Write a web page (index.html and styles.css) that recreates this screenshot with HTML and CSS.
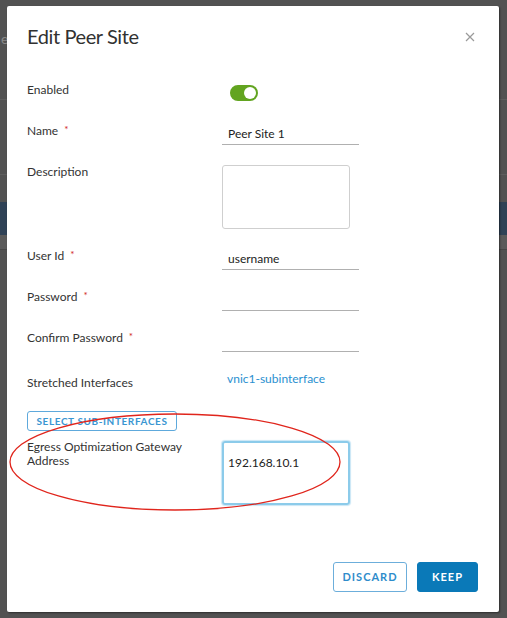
FILE: index.html
```html
<!DOCTYPE html>
<html>
<head>
<meta charset="utf-8">
<link rel="stylesheet" href="styles.css">
</head>
<body>
<div class="backdrop">
  <div class="bg-head"><span class="bg-letter">e</span></div>
  <div class="bg-line"></div>
  <div class="bg-gap"></div>
  <div class="bg-line"></div>
  <div class="bg-gap2"></div>
  <div class="bg-blue"></div>
  <div class="bg-light"></div>
</div>

<div class="modal">
  <div class="modal-header">
    <h1 class="modal-title">Edit Peer Site</h1>
    <svg class="close" width="10" height="10" viewBox="0 0 10 10"><path d="M1 1 L9 9 M9 1 L1 9" stroke="#9a9a9a" stroke-width="1.2" fill="none"/></svg>
  </div>

  <div class="form">
    <div class="row">
      <div class="label">Enabled</div>
      <div class="control"><div class="toggle"><div class="knob"></div></div></div>
    </div>
    <div class="row">
      <div class="label">Name<span class="req">*</span></div>
      <div class="control"><div class="input">Peer Site 1</div></div>
    </div>
    <div class="row row-tall">
      <div class="label">Description</div>
      <div class="control"><div class="textarea"></div></div>
    </div>
    <div class="row">
      <div class="label">User Id<span class="req">*</span></div>
      <div class="control"><div class="input">username</div></div>
    </div>
    <div class="row">
      <div class="label">Password<span class="req">*</span></div>
      <div class="control"><div class="input"></div></div>
    </div>
    <div class="row row-mid">
      <div class="label">Confirm Password<span class="req">*</span></div>
      <div class="control"><div class="input"></div></div>
    </div>
    <div class="row row-stretch">
      <div class="label">Stretched Interfaces</div>
      <div class="control"><span class="link">vnic1-subinterface</span></div>
    </div>
    <div class="btn-row">
      <div class="btn-outline-sm">SELECT SUB-INTERFACES</div>
    </div>
    <div class="row row-egress">
      <div class="label label-wrap">Egress Optimization Gateway<br>Address</div>
      <div class="control"><div class="textarea focus">192.168.10.1</div></div>
    </div>
  </div>

  <div class="footer">
    <div class="btn btn-outline">DISCARD</div>
    <div class="btn btn-primary">KEEP</div>
  </div>
</div>

<svg class="annotation" width="507" height="618" viewBox="0 0 507 618">
  <ellipse cx="175" cy="462" rx="165" ry="48" fill="none" stroke="#e0251c" stroke-width="1.3"/>
</svg>
</body>
</html>
```
FILE: styles.css
```css
html, body {
  margin: 0;
  padding: 0;
}
body {
  width: 507px;
  height: 618px;
  background: #525252;
  overflow: hidden;
  position: relative;
  font-family: Lato, "Open Sans", sans-serif;
  color: #333;
}

/* page behind the modal */
.backdrop {
  display: flex;
  flex-direction: column;
}
.bg-head {
  height: 99px;
}
.bg-letter {
  display: block;
  padding: 31px 0 0 1px;
  font-size: 14px;
  line-height: 16px;
  color: #8a8a8a;
}
.bg-line {
  height: 1px;
  background: #5e5e5e;
}
.bg-gap { height: 74px; }
.bg-gap2 { height: 27px; }
.bg-blue {
  height: 33px;
  background: #2f4256;
}
.bg-light {
  height: 14px;
  background: #5a5a5a;
  border-bottom: 1px solid #474747;
}

/* modal */
.modal {
  position: absolute;
  left: 7px;
  top: 6px;
  width: 492px;
  height: 606px;
  background: #fff;
  box-shadow: 1px 1px 2px rgba(0,0,0,0.45);
  border-radius: 2px;
  box-sizing: border-box;
  padding: 18px 21px 0 20px;
  display: flex;
  flex-direction: column;
}
.modal-header {
  display: flex;
  justify-content: space-between;
  align-items: flex-start;
  height: 58px;
}
.modal-title {
  margin: 0;
  font-size: 20px;
  line-height: 24px;
  font-weight: 400;
  letter-spacing: -0.4px;
  color: #313131;
}
.close {
  margin-top: 8px;
  margin-right: 3px;
}

.form {
  display: flex;
  flex-direction: column;
}
.row {
  display: flex;
  height: 41px;
}
.row-tall { height: 84px; }
.row-mid { height: 45px; }
.row-stretch { height: 36px; }
.row-egress { height: 70px; }
.label {
  width: 195px;
  flex: none;
  font-size: 12px;
  line-height: 13px;
  color: #333;
  padding-top: 1px;
}
.label-wrap {
  line-height: 14px;
  padding-top: 0;
}
.req {
  color: #d0281c;
  font-size: 10px;
  margin-left: 6px;
  vertical-align: top;
  position: relative;
  top: -1px;
}
.control {
  flex: none;
}
.toggle {
  margin-top: 3px;
  margin-left: 8px;
  width: 28px;
  height: 16px;
  border-radius: 8px;
  background: #62a420;
  position: relative;
}
.knob {
  position: absolute;
  right: 2px;
  top: 2px;
  width: 12px;
  height: 12px;
  border-radius: 50%;
  background: #fff;
}
.input {
  margin-top: 1px;
  width: 137px;
  height: 21px;
  box-sizing: border-box;
  border-bottom: 1px solid #b0b0b0;
  padding: 0 6px;
  font-size: 12px;
  line-height: 19px;
  color: #222;
}
.textarea {
  margin-top: 1px;
  width: 128px;
  height: 64px;
  box-sizing: border-box;
  border: 1px solid #cfcfcf;
  border-radius: 3px;
  font-size: 12px;
  color: #222;
}
.textarea.focus {
  border: 2px solid #8ccbea;
  box-shadow: 0 0 1px 1px #c9e6f5;
  padding: 12px 4px 0 4px;
  line-height: 16px;
}
.link {
  display: block;
  margin-top: -3px;
  margin-left: 5px;
  font-size: 12px;
  line-height: 14px;
  color: #2a90d0;
}
.btn-row {
  display: flex;
  height: 29px;
}
.btn-outline-sm {
  width: 150px;
  height: 20px;
  box-sizing: border-box;
  border: 1px solid #5ea9dc;
  border-radius: 3px;
  color: #3a96d2;
  font-size: 10px;
  font-weight: 700;
  letter-spacing: 0.6px;
  line-height: 18px;
  text-align: center;
}

.footer {
  margin-top: auto;
  margin-bottom: 20px;
  display: flex;
  justify-content: flex-end;
  gap: 10px;
}
.btn {
  height: 30px;
  box-sizing: border-box;
  border-radius: 3px;
  font-size: 11px;
  font-weight: 700;
  letter-spacing: 1px;
  line-height: 28px;
  text-align: center;
}
.btn-outline {
  width: 74px;
  border: 1px solid #6caedb;
  color: #2e8ccb;
}
.btn-primary {
  width: 61px;
  background: #0a79b8;
  border: 1px solid #0a79b8;
  color: #fff;
}

.annotation {
  position: absolute;
  left: 0;
  top: 0;
  pointer-events: none;
}
```
